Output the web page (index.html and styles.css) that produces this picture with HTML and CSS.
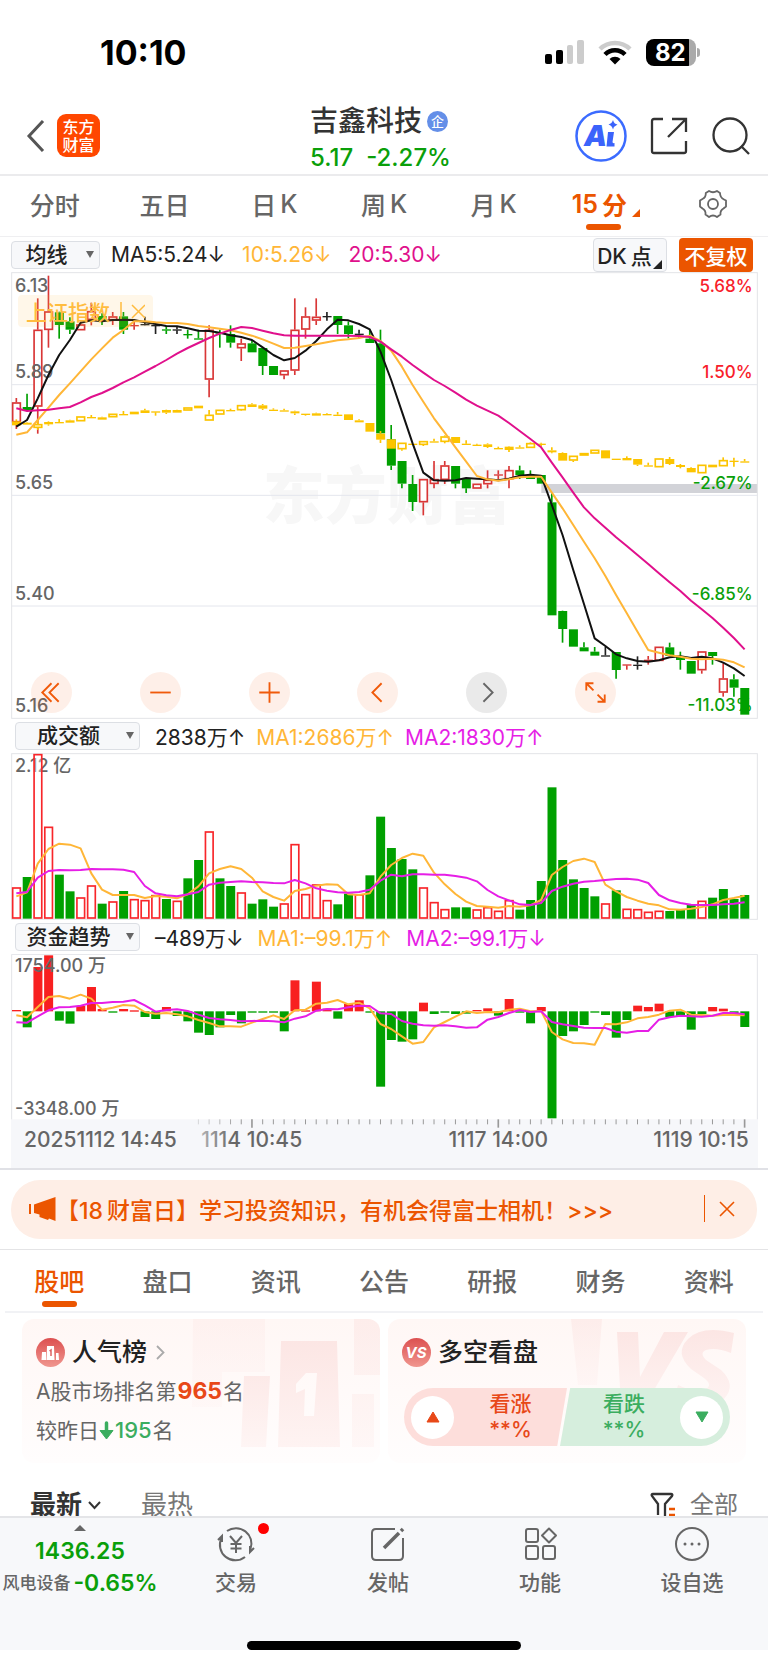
FILE: index.html
```html
<!DOCTYPE html>
<html lang="zh-CN">
<head>
<meta charset="utf-8">
<meta name="viewport" content="width=device-width, initial-scale=1">
<title>吉鑫科技</title>
<link rel="stylesheet" href="styles.css">
</head>
<body>
<div class="status">
  <span class="clock">10:10</span>
  <div class="status-icons">
    <svg width="39" height="26" viewBox="0 0 39 26"><rect x="0" y="15" width="7" height="10" rx="2"/><rect x="11" y="11" width="7" height="14" rx="2"/><rect x="22" y="6" width="6" height="19" rx="2" fill="#ccc"/><rect x="32" y="1" width="7" height="24" rx="2" fill="#ccc"/></svg>
    <svg width="34" height="25" viewBox="0 0 34 25" fill="none" stroke-width="4.5"><path d="M2 9A21.5 21.5 0 0 1 32 9" stroke="#ccc"/><path d="M7 14.5A14 14 0 0 1 27 14.5" stroke="#000"/><path d="M17 24.5L11.500 19A8 8 0 0 1 22.500 19Z" fill="#000"/></svg>
    <div class="battery-wrap"><span class="battery"><span class="battery-level">82</span></span><span class="battery-tip"></span></div>
  </div>
</div>

<header class="header">
  <div class="header-left">
    <button class="icon-btn" aria-label="返回"><svg width="20" height="32" viewBox="0 0 20 32" fill="none" stroke="#555" stroke-width="3"><path d="M18 1L4 16L18 31"/></svg></button>
    <a class="logo" href="#">东方<br>财富</a>
  </div>
  <div class="header-title">
    <h1 class="name">吉鑫科技<span class="badge">企</span></h1>
    <p class="quote"><span>5.17</span><span>-2.27%</span></p>
  </div>
  <div class="header-right">
    <button class="icon-btn" aria-label="Ai"><svg width="52" height="52" viewBox="0 0 52 52"><circle cx="26" cy="26" r="24.500" fill="#fff" stroke="#3b6bff" stroke-width="2.500"/><text class="ai-text" x="9" y="36">A</text><path d="M33 22h6l-1.500 10q0 1.500 2 1v3.500h-8z" fill="#3b63fb"/><path d="M38 10q1 4 4.500 4.500q-3.500 1.500-4.500 5q-1-4-4.500-5q3.500-1 4.500-4.500z" fill="#3b63fb"/></svg></button>
    <button class="icon-btn" aria-label="分享"><svg width="38" height="38" viewBox="0 0 38 38" fill="none" stroke="#333" stroke-width="2.300"><path d="M13 2H4Q2 2 2 4V34Q2 36 4 36H34Q36 36 36 34V24M22 2H36V15M36 2L18 20"/></svg></button>
    <button class="icon-btn" aria-label="搜索"><svg width="40" height="40" viewBox="0 0 40 40" fill="none" stroke="#333" stroke-width="2.300"><circle cx="19" cy="19" r="16.500"/><path d="M30 30L38 38"/></svg></button>
  </div>
</header>

<nav class="tabs period-tabs">
  <a href="#">分时</a><a href="#">五日</a><a href="#">日<i>K</i></a><a href="#">周<i>K</i></a><a href="#">月<i>K</i></a>
  <a href="#" class="active more">15<i>分</i></a>
  <a href="#" aria-label="设置"><svg width="30" height="30" viewBox="0 0 30 30" fill="none" stroke="#666" stroke-width="1.800"><path d="M11 2Q15 4.500 19 2L22 4Q22 8.500 26 10.500L28 11.500V17.500L25.500 19.500Q22 21.500 22.500 25.500L19 28Q15 25 11 28L7.500 25.500Q8 21.500 4.500 19.500L2 17.500V11.500L4.500 10Q8 8.500 7.800 4Z" stroke-linejoin="round"/><circle cx="15" cy="15" r="5"/></svg></a>
</nav>

<main>
  <section class="panel">
    <div class="legend">
      <label class="picker small"><select aria-label="主图指标"><option>均线</option></select></label>
      <ul class="values main-values"><li>MA5:5.24↓</li><li class="amber">10:5.26↓</li><li class="pink">20:5.30↓</li></ul>
      <div class="legend-actions"><button class="dk">DK<i>点</i></button><button class="adjust">不复权</button></div>
    </div>
    <div class="chart-box">
      <svg class="chart" id="price" viewBox="33 36 2241 1341" role="img" aria-label="15分钟K线"></svg>
      <button class="index-tag">上证指数<svg width="30" height="20" viewBox="0 0 30 20" fill="none" stroke="#ffbc3f" stroke-width="1.500"><path d="M6 1V18M17 4L30 17M30 4L17 17"/></svg></button>
      <div class="tools">
        <button aria-label="更早"><svg viewBox="0 0 40 40"><path d="M20 11L11 20L20 29M27 11L18 20L27 29"/></svg></button>
        <button aria-label="缩小"><svg viewBox="0 0 40 40"><path d="M10 20H30"/></svg></button>
        <button aria-label="放大"><svg viewBox="0 0 40 40"><path d="M10 20H30M20 10V30"/></svg></button>
        <button aria-label="向左"><svg viewBox="0 0 40 40"><path d="M24 11L15 20L24 29"/></svg></button>
        <button aria-label="向右" class="off"><svg viewBox="0 0 40 40"><path d="M17 11L26 20L17 29"/></svg></button>
        <button aria-label="全屏"><svg viewBox="0 0 40 40"><path d="M11 18V11H18M11 11L18 18M22 29H29V22M29 29L22 22"/></svg></button>
      </div>
    </div>
  </section>

  <section class="panel">
    <div class="legend sub">
      <label class="picker"><select aria-label="副图一"><option>成交额</option></select></label>
      <ul class="values"><li>2838万↑</li><li class="amber">MA1:2686万↑</li><li class="violet">MA2:1830万↑</li></ul>
    </div>
    <svg class="chart" id="volume" viewBox="33 99 2241 501" role="img" aria-label="成交额"></svg>
  </section>

  <section class="panel">
    <div class="legend sub">
      <label class="picker"><select aria-label="副图二"><option>资金趋势</option></select></label>
      <ul class="values flow-values"><li>–489万↓</li><li class="amber">MA1:–99.1万↑</li><li class="violet">MA2:–99.1万↓</li></ul>
    </div>
    <svg class="chart" id="flow" viewBox="33 87 2241 642" role="img" aria-label="资金趋势"></svg>
  </section>
</main>

<aside class="notice-wrap">
  <div class="notice">
    <svg width="27" height="24" viewBox="0 0 27 24" fill="#eb5500"><rect x="0" y="7" width="2" height="10"/><path d="M5 7.500L26.500 0V24L20 21.500L19 23L10.500 20V17.500L5 16z"/></svg>
    <a href="#">【18<i>财富日</i>】学习投资知识，有机会得富士相机！&gt;&gt;&gt;</a>
    <button class="icon-btn close" aria-label="关闭"><svg width="16" height="16" viewBox="0 0 16 16" stroke="#eb5500" stroke-width="1.600"><path d="M1 1L15 15M15 1L1 15"/></svg></button>
  </div>
</aside>

<nav class="tabs info-tabs">
  <a href="#" class="active">股吧</a><a href="#">盘口</a><a href="#">资讯</a><a href="#">公告</a><a href="#">研报</a><a href="#">财务</a><a href="#">资料</a>
</nav>

<section class="cards">
  <article class="card">
    <svg class="art" viewBox="0 0 358 144" preserveAspectRatio="xMaxYMin meet" aria-hidden="true"><defs><linearGradient id="blush" x2="0" y2="1"><stop stop-color="#fce6e4"/><stop offset="1" stop-color="#fef3f2"/></linearGradient></defs><g fill="url(#blush)"><path d="M171 0H243V53H200V88H170z" opacity=".35"/><path d="M222 57H248L244 128H219z" opacity=".8"/><path d="M259 22H315L318 128H256zM284 54L274 65V74L283 70L282 97H292L295 54z" fill-rule="evenodd"/><path d="M332 0H358V56H332zM330 75H352V128H330z" opacity=".6"/></g></svg>
    <h2 class="card-head"><svg width="29" height="29" viewBox="0 0 29 29"><defs><linearGradient id="coral" x2="0" y2="1"><stop stop-color="#dc5050"/><stop offset="1" stop-color="#f0968f"/></linearGradient></defs><circle cx="14.500" cy="14.500" r="14.500" fill="url(#coral)"/><path d="M6 14H10V22H5.500zM11 8H18L18.500 22H10.500zM20 15H22.500L23 22H20z" fill="#fff"/><path d="M13.500 13L15 12V18" stroke="#dc6060" stroke-width="1.500" fill="none"/></svg>人气榜<svg class="go" width="9" height="15" viewBox="0 0 9 15" fill="none" stroke="#aaa" stroke-width="1.800"><path d="M1 1L7.500 7.500L1 14"/></svg></h2>
    <p class="rank">A股市场排名第<b>965</b>名</p>
    <p class="rank">较昨日<svg width="15" height="19" viewBox="0 0 15 19"><path d="M7.500 2V12" stroke="#3bad5f" stroke-width="3.500" stroke-linecap="round"/><path d="M1 9.500H14L7.500 18Z" fill="#3bad5f" stroke="#3bad5f" stroke-linejoin="round"/></svg><span class="up">195</span>名</p>
  </article>
  <article class="card">
    <svg class="art" viewBox="0 0 358 144" preserveAspectRatio="xMaxYMin meet" aria-hidden="true"><g fill="url(#blush)"><path d="M183 0H214L209 66H190z" opacity=".6"/><path d="M229 13H250L252 58L276 13H300L256 88H233z"/><path d="M346 14L343 34Q328 28 318 31Q311 34 318 41L333 51Q349 66 336 80H330Q318 92 285 84L290 66Q306 74 318 70Q325 66 316 59L303 50Q286 34 300 20Q314 6 346 14z"/></g></svg>
    <h2 class="card-head"><svg width="29" height="29" viewBox="0 0 29 29"><circle cx="14.500" cy="14.500" r="14.500" fill="url(#coral)"/><text class="vs" x="14" y="20">VS</text></svg>多空看盘</h2>
    <div class="vote">
      <button class="bull"><span class="knob"><svg width="14" height="12" viewBox="0 0 14 12"><path d="M7 1L13 11H1Z" fill="#e84818" stroke="#e84818" stroke-linejoin="round"/></svg></span><span class="vote-text">看涨<br>**%</span></button>
      <button class="bear"><span class="vote-text">看跌<br>**%</span><span class="knob"><svg width="14" height="12" viewBox="0 0 14 12"><path d="M7 11L13 1H1Z" fill="#3bad5f" stroke="#3bad5f" stroke-linejoin="round"/></svg></span></button>
    </div>
  </article>
</section>

<div class="feed-bar">
  <button class="sort on">最新<svg width="13" height="9" viewBox="0 0 13 9" fill="none" stroke="#333" stroke-width="2"><path d="M1 1L6.500 7L12 1"/></svg></button>
  <button class="sort">最热</button>
  <button class="sort filter"><svg width="26" height="26" viewBox="0 0 26 26" fill="none" stroke="#333" stroke-width="2.300"><path d="M8 23V12L2 4Q1 2 3 2H21Q23 2 22 4L15 12V25"/><path d="M19 17H25M19 23H25" stroke="#eb5500"/></svg>全部</button>
</div>

<footer class="dock">
  <nav class="dock-grid">
    <a class="sector" href="#"><span class="caret"></span><span class="num">1436.25</span><span class="line"><small>风电设备</small><span class="num">-0.65%</span></span></a>
    <a class="dock-item" href="#"><svg width="40" height="36" viewBox="0 0 40 36"><path d="M11 5A15.500 15.500 0 0 1 34.500 23M29 31A15.500 15.500 0 0 1 5.500 12M2 14L6 10V16M38 22L34 26V20"/><path d="M14 10L20 17L26 10M20 17V27M14.500 18H25.500M14.500 22.500H25.500"/></svg><span class="dot"></span>交易</a>
    <a class="dock-item" href="#"><svg width="40" height="36" viewBox="0 0 40 36"><path d="M27 3H8Q4 3 4 7V30Q4 34 8 34H31Q35 34 35 30V12"/><path d="M16 22L31 7" stroke-width="3.500"/><path d="M33 5L35 3" stroke-width="3.500"/></svg>发帖</a>
    <a class="dock-item" href="#"><svg width="40" height="36" viewBox="0 0 40 36"><rect x="6" y="3" width="12" height="13" rx="2"/><rect x="6" y="20" width="12" height="13" rx="2"/><rect x="23" y="20" width="12" height="13" rx="2"/><path d="M29 2.500L36 9.500L29 16.500L22 9.500Z" stroke-linejoin="round"/></svg>功能</a>
    <a class="dock-item" href="#"><svg width="40" height="36" viewBox="0 0 40 36"><circle cx="20" cy="18" r="16"/><path d="M13 18H13.010M20 18H20.010M27 18H27.010" stroke-width="3" stroke-linecap="round"/></svg>设自选</a>
  </nav>
  <div class="home-bar"></div>
</footer>
<script src="charts.js"></script>
</body>
</html>
```

FILE: styles.css
```css
* { box-sizing: border-box; }
html { background: #f7f8fa; }
body, h1, h2, p, ul { margin: 0; padding: 0; }
body {
  background: #fff;
  color: #222;
  font-family: Inter, "Noto Sans CJK SC", sans-serif;
  font-size: 21px;
}
a { color: inherit; text-decoration: none; }
i { font-style: normal; margin-left: 4px; }
button, select { font: inherit; color: inherit; border: 0; background: none; padding: 0; margin: 0; }
.icon-btn { display: flex; }
ul { list-style: none; }

.status { display: flex; justify-content: space-between; align-items: center; height: 104px; padding: 0 68px 0 100px; }
.clock { font-size: 34px; font-weight: 700; color: #000; }
.status-icons { display: flex; align-items: center; gap: 14px; }
.battery-wrap { display: flex; align-items: center; gap: 1px; }
.battery { width: 50px; height: 27px; border-radius: 8px; overflow: hidden; background: linear-gradient(90deg, #000 43px, #aaa 43px); }
.battery-level { display: block; padding-left: 9px; color: #fff; font-size: 24px; font-weight: 700; line-height: 27px; }
.battery-tip { width: 3px; height: 9px; border-radius: 0 3px 3px 0; background: #aaa; }

.header { display: grid; grid-template-columns: 1fr auto 1fr; align-items: center; height: 72px; padding: 0 17px 0 25px; border-bottom: 2px solid #ebebed; }
.header-left { display: flex; align-items: center; gap: 12px; padding-bottom: 9px; }
.logo { width: 43px; height: 43px; padding-top: 4px; border-radius: 9px; background: #ff4700; color: #fff; font-size: 16px; font-weight: 500; line-height: 18px; text-align: center; }
.header-title { padding-right: 15px; }
.name { display: flex; align-items: center; gap: 5px; font-size: 28px; font-weight: 500; line-height: 35px; color: #333; }
.badge { width: 21px; height: 21px; border-radius: 50%; background: #648fe8; color: #fff; font-size: 13px; line-height: 20px; text-align: center; }
.quote { display: flex; gap: 13px; font-size: 24px; font-weight: 500; line-height: 37px; color: #0a9f0a; }
.header-right { display: flex; justify-content: flex-end; align-items: center; gap: 23px; padding-bottom: 9px; }
.ai-text { font: italic 900 29px Inter, sans-serif; fill: #3b63fb; }

.tabs { display: grid; grid-template-columns: repeat(7, 1fr); font-size: 25px; font-weight: 500; color: #666; }
.tabs a { position: relative; display: flex; align-items: center; justify-content: center; }
.tabs .active { color: #eb5500; }
.tabs .active::after { content: ""; position: absolute; left: 50%; bottom: 5px; width: 35px; height: 6px; margin-left: -17px; border-radius: 3px; background: #eb5500; }
.period-tabs { height: 61px; padding-bottom: 4px; border-bottom: 1px solid #efeff1; }
.period-tabs .more { padding-right: 8px; font-weight: 600; }
.period-tabs .more::after { bottom: 2px; }
.more::before { content: ""; position: absolute; right: 18px; bottom: 15px; border-left: 8px solid transparent; border-bottom: 8px solid #eb5500; }
.info-tabs { height: 63px; margin: 0 5px; padding-bottom: 1px; border-bottom: 2px solid #f1f2f5; }
.info-tabs .active::after { bottom: 3px; }

.panel { margin: 0 10px 0 11px; }
.legend { display: flex; align-items: center; height: 35px; }
.legend.sub { height: 34px; padding-left: 4px; }
.picker { position: relative; display: block; width: 125px; margin-right: 15px; }
.picker.small { width: 89px; margin-right: 11px; }
.picker select { width: 100%; height: 28px; padding: 0 22px 0 4px; border: 1px solid #dcdfe4; border-radius: 4px; background: #f7f8fa; font-weight: 500; text-align: center; text-align-last: center; line-height: 26px; appearance: none; }
.picker::after { content: ""; position: absolute; right: 6px; top: 10px; border: 4px solid transparent; border-top: 7px solid #666; border-bottom: 0; }
.values { display: flex; gap: 11px; white-space: nowrap; }
.main-values { gap: 17px; }
.flow-values { gap: 14px; }
.amber { color: #ffb637; }
.pink { color: #e0108c; }
.violet { color: #e61ee6; }
.legend-actions { display: flex; gap: 12px; margin: 0 5px 0 auto; font-weight: 500; }
.legend-actions button { width: 74px; height: 34px; border-radius: 4px; }
.dk { position: relative; padding-right: 11px; border: 1px solid #dcdfe4; background: #f7f8fa; }
.dk::after { content: ""; position: absolute; right: 4px; bottom: 2px; border-left: 9px solid transparent; border-bottom: 9px solid #222; }
.adjust { background: #eb5500; color: #fff; }

.chart-box { position: relative; }
.chart { display: block; width: 100%; height: auto; }
.chart text { font-family: Inter, "Noto Sans CJK SC", sans-serif; font-weight: 500; }
.chart .tick-label { font-size: 54px; fill: #666; }
.chart .axis-label { font-size: 63px; fill: #666; }
.chart .rise { fill: #f8202a; font-size: 51px; }
.chart .fall { fill: #0a9f0a; font-size: 51px; }
.chart .watermark { font-size: 186px; font-weight: 900; fill: #f7f7f7; }
.index-tag { position: absolute; left: 7px; top: 23px; display: flex; align-items: center; gap: 5px; height: 32px; padding: 0 8px; border-radius: 4px; background: rgba(255, 190, 70, .12); color: #ffbc3f; font-weight: 500; }
.tools { position: absolute; left: 20px; right: 142px; bottom: 6px; display: flex; justify-content: space-between; }
.tools button { width: 41px; height: 41px; border-radius: 50%; background: rgba(250, 100, 30, .1); }
.tools svg { display: block; fill: none; stroke: #f05a0a; stroke-width: 1.8; }
.tools .off { background: rgba(80, 80, 80, .12); }
.tools .off svg { stroke: #666; }

.notice-wrap { padding: 10px 11px; border-top: 2px solid #e0e1e6; border-bottom: 1px solid #e4e4e6; }
.notice { display: flex; align-items: center; height: 59px; padding: 0 22px 2px 18px; border-radius: 29px; background: #feeee6; color: #eb5500; font-size: 23px; font-weight: 500; white-space: nowrap; }
.close { align-items: center; height: 27px; margin-left: auto; padding-left: 14px; border-left: 1px solid #eb5500; }

.cards { display: grid; grid-template-columns: 1fr 1fr; gap: 8px; padding: 6px 22px 0; }
.card { position: relative; height: 144px; padding: 13px 14px 0; border-radius: 12px; background: linear-gradient(#fff7f5, #fffdfd); overflow: hidden; }
.art { position: absolute; right: 0; top: 0; width: 358px; height: 144px; }
.vs { font: italic 700 15px Inter, sans-serif; fill: #fff; text-anchor: middle; }
.card-head { position: relative; display: flex; align-items: center; gap: 7px; font-size: 25px; font-weight: 500; line-height: 40px; }
.go { margin-left: 2px; }
.rank { position: relative; display: flex; align-items: center; line-height: 39px; color: #666; }
.rank b { padding: 0 1px; color: #e84818; font-size: 23px; }
.up { padding: 0 1px; color: #3bad5f; font-size: 22px; font-weight: 500; }
.vote { position: relative; display: grid; grid-template-columns: 1fr 1fr; height: 58px; margin: 16px 2px 0; border-radius: 29px; overflow: hidden; }
.vote button { display: flex; align-items: center; line-height: 26px; font-weight: 500; }
.bull { padding-left: 7px; background: #fddedb; color: #e84818; clip-path: polygon(0 0, 100% 0, 94% 100%, 0 100%); }
.bear { padding: 0 7px 0 8px; margin-left: -7px; background: #d6eedd; color: #3bad5f; clip-path: polygon(6% 0, 100% 0, 100% 100%, 0 100%); }
.knob { display: flex; align-items: center; justify-content: center; flex: none; width: 43px; height: 43px; border-radius: 50%; background: #fff; }
.vote-text { flex: 1; text-align: center; }

.feed-bar { display: flex; align-items: flex-start; gap: 40px; height: 53px; padding: 21px 30px 0; overflow: hidden; font-size: 26px; color: #777; }
.sort { display: flex; align-items: center; gap: 6px; line-height: 42px; }
.on { font-weight: 700; color: #333; }
.filter { gap: 14px; margin-left: auto; font-size: 24px; }

.dock { border-top: 2px solid #e4e5e8; background: #f7f8fa; color: #666; font-weight: 500; }
.dock-grid { display: grid; grid-template-columns: 160px repeat(4, 1fr); height: 123px; }
.sector { display: flex; flex-direction: column; align-items: center; padding-top: 7px; }
.caret { border: 6px solid transparent; border-bottom: 6px solid #666; border-top: 0; }
.num { font-size: 23px; font-weight: 600; line-height: 40px; color: #0a9f0a; }
.line { display: flex; align-items: center; gap: 3px; line-height: 24px; white-space: nowrap; }
.line .num { line-height: 24px; }
small { font-size: 17px; }
.dock-item { position: relative; display: flex; flex-direction: column; align-items: center; gap: 6px; padding-top: 8px; line-height: 30px; }
.dock-item svg { fill: none; stroke: #666; stroke-width: 2; }
.dot { position: absolute; left: 50%; top: 5px; width: 11px; height: 11px; margin-left: 22px; border-radius: 50%; background: #f00; }
.home-bar { width: 274px; height: 9px; margin: 0 auto 15px; border-radius: 5px; background: #000; }
```

FILE: charts.js
```javascript
const STEP = 32.13;
const x = i => 49 + STEP * i;
const RED = '#d93636', GREEN = '#00a000', BLACK = '#222', GOLD = '#fcc400';
const nums = s => s.split(/[\s,]+/).map(Number);
const rect = (i, a, b, fill, stroke) => {
  const top = Math.min(a, b), h = Math.max(Math.abs(b - a), 4);
  return stroke
    ? `<rect x="${x(i) - 11}" y="${top + 2}" width="23" height="${Math.max(h - 4, 2)}" fill="${fill}" stroke="${stroke}" stroke-width="5"/>`
    : `<rect x="${x(i) - 13}" y="${top}" width="27" height="${h}" fill="${fill}"/>`;
};
const wick = (i, a, b, c) => b > a ? `<path d="M${x(i)} ${a}V${b}" stroke="${c}" stroke-width="5"/>` : '';
const line = (ys, c) => `<polyline points="${ys.map((y, i) => x(i) + ',' + y).join(' ')}" fill="none" stroke="${c}" stroke-width="6" stroke-linejoin="round"/>`;
const text = (s, px, y, cls, anchor = 'start') => `<text x="${px}" y="${y}" class="${cls}" text-anchor="${anchor}">${s}</text>`;
const frame = (y, h) => `<rect x="35" y="${y}" width="2237" height="${h}" fill="none" stroke="#e3e4e8" stroke-width="3"/>`;

// type, high, body top, body bottom, low
const candles = `r 414 427 487 507|g 401 441 450 452|r 115 209 440 521|r 47 154 210 263|g 155 157 195 236|g 172 184 209 222|r 185 193 211 211|r 128 153 180 196|g 160 168 180 195|r 156 169 181 195|g 156 169 209 222|r 180 195 198 209|k 170 192 195 196|k 195 195 198 222|g 198 208 211 222|k 198 208 211 222|g 209 222 225 236|g 209 235 238 238|r 196 209 359 412|g 209 217 221 263|g 196 222 248 263|r 236 250 265 303|g 240 250 277 277|g 264 264 318 345|g 318 318 345 345|r 331 331 346 358|r 115 209 332 345|r 142 169 209 236|r 115 170 182 195|k 156 168 171 182|g 168 168 195 222|g 184 196 222 235|k 209 221 224 235|g 209 236 249 249|g 209 250 520 533|g 495 538 617 630|g 603 603 671 685|g 645 672 726 753|r 657 657 727 766|r 603 657 672 685|r 603 616 660 672|g 618 618 671 685|g 657 657 685 699|r 671 671 686 686|r 631 659 673 685|r 631 643 646 657|r 618 630 658 685|g 617 631 645 657|g 631 646 657 657|g 645 645 671 671|g 700 727 1066 1066|g 1052 1053 1107 1148|g 1108 1108 1160 1160|g 1147 1162 1174 1174|g 1161 1175 1187 1187|k 1160 1186 1189 1189|g 1176 1176 1230 1256|r 1213 1213 1216 1229|k 1189 1214 1217 1229|r 1188 1199 1202 1214|r 1160 1160 1203 1203|g 1148 1162 1188 1188|g 1175 1190 1200 1229|g 1203 1203 1241 1241|r 1174 1174 1231 1241|g 1176 1176 1188 1214|r 1210 1255 1298 1310|g 1243 1258 1283 1310|g 1284 1284 1364 1364`;
const indexBars = `f 478 484 496 496|f 487 488 494 494|h 480 492 504 510|f 484 486 493 497|f 477 486 489 489|f 479 481 488 488|h 469 469 484 484|f 465 471 474 474|f 470 472 479 479|h 461 461 472 472|f 453 462 465 465|f 455 455 463 463|f 446 451 459 459|f 454 454 457 467|f 449 450 458 462|f 449 450 458 458|h 442 442 452 452|f 437 437 445 445|h 450 464 482 482|h 449 449 464 464|f 446 450 453 453|h 435 435 451 453|f 430 433 441 441|f 432 436 446 450|f 445 449 452 452|f 446 451 454 454|f 452 454 460 465|f 461 461 464 467|f 458 460 467 467|f 460 462 465 465|f 456 464 467 467|f 463 463 480 480|f 478 481 487 487|f 489 489 515 515|f 513 521 539 549|f 538 538 566 566|h 548 548 568 572|f 550 551 554 554|h 543 543 555 558|f 536 544 547 547|h 526 529 546 550|f 531 531 549 549|f 541 551 554 554|f 551 554 557 557|f 550 553 561 564|f 560 564 567 567|f 559 560 570 576|f 556 562 565 565|h 547 549 564 564|f 548 551 554 560|f 562 571 577 580|f 577 579 602 602|h 587 587 602 606|h 579 579 587 587|h 569 569 581 581|f 571 571 595 595|f 596 596 599 599|f 589 594 601 601|f 597 597 614 618|f 608 616 619 619|h 595 595 622 622|f 591 597 612 615|f 612 615 621 625|f 622 624 637 637|h 614 614 640 640|f 614 614 622 622|h 592 600 619 619|f 593 602 605 620|f 597 604 608 608`;
const ma5 = nums('500 480 415 345 285 240 188 181 184 180 179 180 187 192 198 199 205 212 213 218 226 231 240 262 285 301 294 272 243 208 179 181 192 208 275 360 455 550 638 661 662 661 654 656 658 661 656 647 644 647 735 825 930 1032 1135 1158 1183 1195 1203 1205 1201 1192 1189 1194 1190 1195 1208 1225 1248');
const ma10 = nums('524 517 480 443 405 370 334 298 265 233 210 184 184 187 189 189 192 198 202 206 211 218 227 238 251 264 263 258 253 247 241 238 234 227 243 272 320 375 425 475 518 562 605 648 658 662 658 652 650 650 698 745 795 845 895 948 1005 1060 1115 1170 1178 1186 1190 1196 1198 1196 1199 1207 1222');
const ma20 = nums('445 453 451 449 445 441 427 411 399 384 367 352 335 318 300 281 264 249 234 221 210 201 204 212 220 226 227 227 227 227 227 227 228 231 245 268 290 315 338 360 378 398 419 437 452 467 489 513 537 562 608 652 698 742 775 803 832 858 885 912 940 967 993 1022 1048 1074 1103 1134 1168');

let out = text('东方财富', 788, 776, 'watermark');
out += '<rect x="1624" y="672" width="648" height="27" fill="#d2d3d8"/>' + frame(38, 1337);
out += '<path d="M35 374H2272M35 706H2272M35 1038H2272" stroke="#e4e6ed" stroke-width="3"/>';
[['5.68%', 95, 'rise'], ['1.50%', 353, 'rise'], ['-2.67%', 686, 'fall'], ['-6.85%', 1019, 'fall'], ['-11.03%', 1353, 'fall']].forEach(([s, y, c]) => out += text(s, 2258, y, c, 'end'));
candles.split('|').forEach((row, i) => {
  const t = row[0], [h, a, b, l] = nums(row.slice(2));
  const c = { r: RED, g: GREEN, k: BLACK }[t];
  out += wick(i, h, a, c) + wick(i, b, l, c) + (t === 'r' && b - a > 4 ? rect(i, a, b, '#fff', c) : rect(i, a, b, c));
});
indexBars.split('|').forEach((row, i) => {
  const [h, a, b, l] = nums(row.slice(2));
  out += wick(i, h, a, GOLD) + wick(i, b, l, GOLD) + (row[0] === 'h' ? rect(i, a, b, '#fff', GOLD) : rect(i, a, b, GOLD));
});
[['6.13', 97], ['5.89', 355], ['5.65', 688], ['5.40', 1021], ['5.16', 1355]].forEach(([s, y]) => out += text(s, 45, y, 'tick-label'));
out += line(ma5, '#111') + line(ma10, '#ffb637') + line(ma20, '#e0108c');
document.getElementById('price').innerHTML = out;

const turnover = 'r503 g471 r103 r321 g464 g514 r533 r497 g551 r545 g513 r538 r541 r526 g537 r543 g475 g420 r335 g475 g498 r518 g551 g538 g560 r551 r373 r523 r494 r541 g553 g521 r524 g466 g290 g384 g417 g448 r503 r547 r568 g562 g562 r569 r562 r573 r541 g569 g540 g483 g202 g420 g478 g504 g529 r551 g511 r567 r568 r576 r573 g573 g569 g555 r543 g533 g507 g537 g525'.split(' ');
out = frame(101, 497) + text('2.12 亿', 45, 155, 'tick-label');
turnover.forEach((v, i) => {
  const y = Number(v.slice(1));
  out += v[0] === 'r' ? rect(i, y - 1, 596, '#ffffff66', '#f8262a') : rect(i, y, 596, GREEN);
});
out += line(nums('529 517 431 387 371 374 385 460 509 525 525 525 534 528 530 535 523 499 460 447 439 447 473 514 531 542 513 507 497 493 494 523 525 520 470 435 414 401 407 458 493 522 545 558 560 563 558 560 556 540 465 441 423 416 426 494 514 531 542 551 556 568 569 566 561 553 540 534 527'), '#ffb637');
out += line(nums('520 516 473 453 450 451 450 447 448 448 449 456 498 520 526 529 523 516 494 488 486 484 486 487 489 490 480 490 505 512 517 518 516 509 482 464 469 463 463 464 464 468 473 484 510 529 541 553 555 549 513 500 491 485 483 480 477 476 479 489 525 541 549 554 555 555 553 551 547'), '#e61ee6');
document.getElementById('volume').innerHTML = out;

const ZERO = 259;
const flow = nums('255 307 126 91 287 296 243 186 252 263 252 256 276 282 246 273 289 323 330 307 270 295 263 263 263 319 166 256 170 251 281 237 226 260 485 345 350 343 233 267 263 267 266 255 250 272 222 259 295 246 580 333 319 300 263 270 338 285 242 246 236 276 276 314 267 246 251 268 306');
out = '<rect x="33" y="583" width="2241" height="146" fill="#f6f7fa"/><path d="M35 583V88H2272V583" fill="none" stroke="#e3e4e8" stroke-width="3"/>';
flow.forEach((v, i) => { out += rect(i, ZERO, v, v < ZERO ? '#f82020' : GREEN); });
out += line(nums('271 277 246 216 213 221 209 221 254 248 240 242 261 266 264 268 274 285 294 304 304 305 293 282 271 282 256 254 236 233 225 238 233 250 297 312 334 356 351 307 291 275 259 264 261 262 254 251 259 258 321 343 354 355 359 297 298 292 280 276 269 257 254 269 270 272 270 270 271'), '#ffb637');
out += line(nums('292 293 274 256 247 246 242 234 234 231 230 225 241 260 255 253 258 269 279 283 285 289 288 287 289 292 281 274 257 252 253 247 242 243 265 267 288 296 301 302 301 304 308 307 284 276 264 255 261 259 291 298 303 308 309 309 320 323 318 318 284 277 272 274 275 272 264 264 268'), '#e61ee6');
for (let i = 17; i <= 68; i++) {
  const major = (i - 22) % 23 === 0;
  out += `<path d="M${x(i)} 583V${major ? 608 : 598}" stroke="#999" stroke-width="${major ? 5 : 3}" opacity="${Math.min(1, (i - 15) / 6)}"/>`;
}
out += '<defs><linearGradient id="fade" gradientUnits="userSpaceOnUse" x1="590" x2="700"><stop stop-color="#666" stop-opacity=".4"/><stop offset="1" stop-color="#666"/></linearGradient></defs>';
out += text('1754.00 万', 45, 140, 'tick-label') + text('-3348.00 万', 45, 571, 'tick-label');
out += text('20251112 14:45', 72, 667, 'axis-label') + text('1114 10:45', 755, 667, 'axis-label', 'middle').replace('<text', '<text style="fill:url(#fade)"');
out += text('1117 14:00', x(45), 667, 'axis-label', 'middle') + text('1119 10:15', 2246, 667, 'axis-label', 'end');
document.getElementById('flow').innerHTML = out;
```
